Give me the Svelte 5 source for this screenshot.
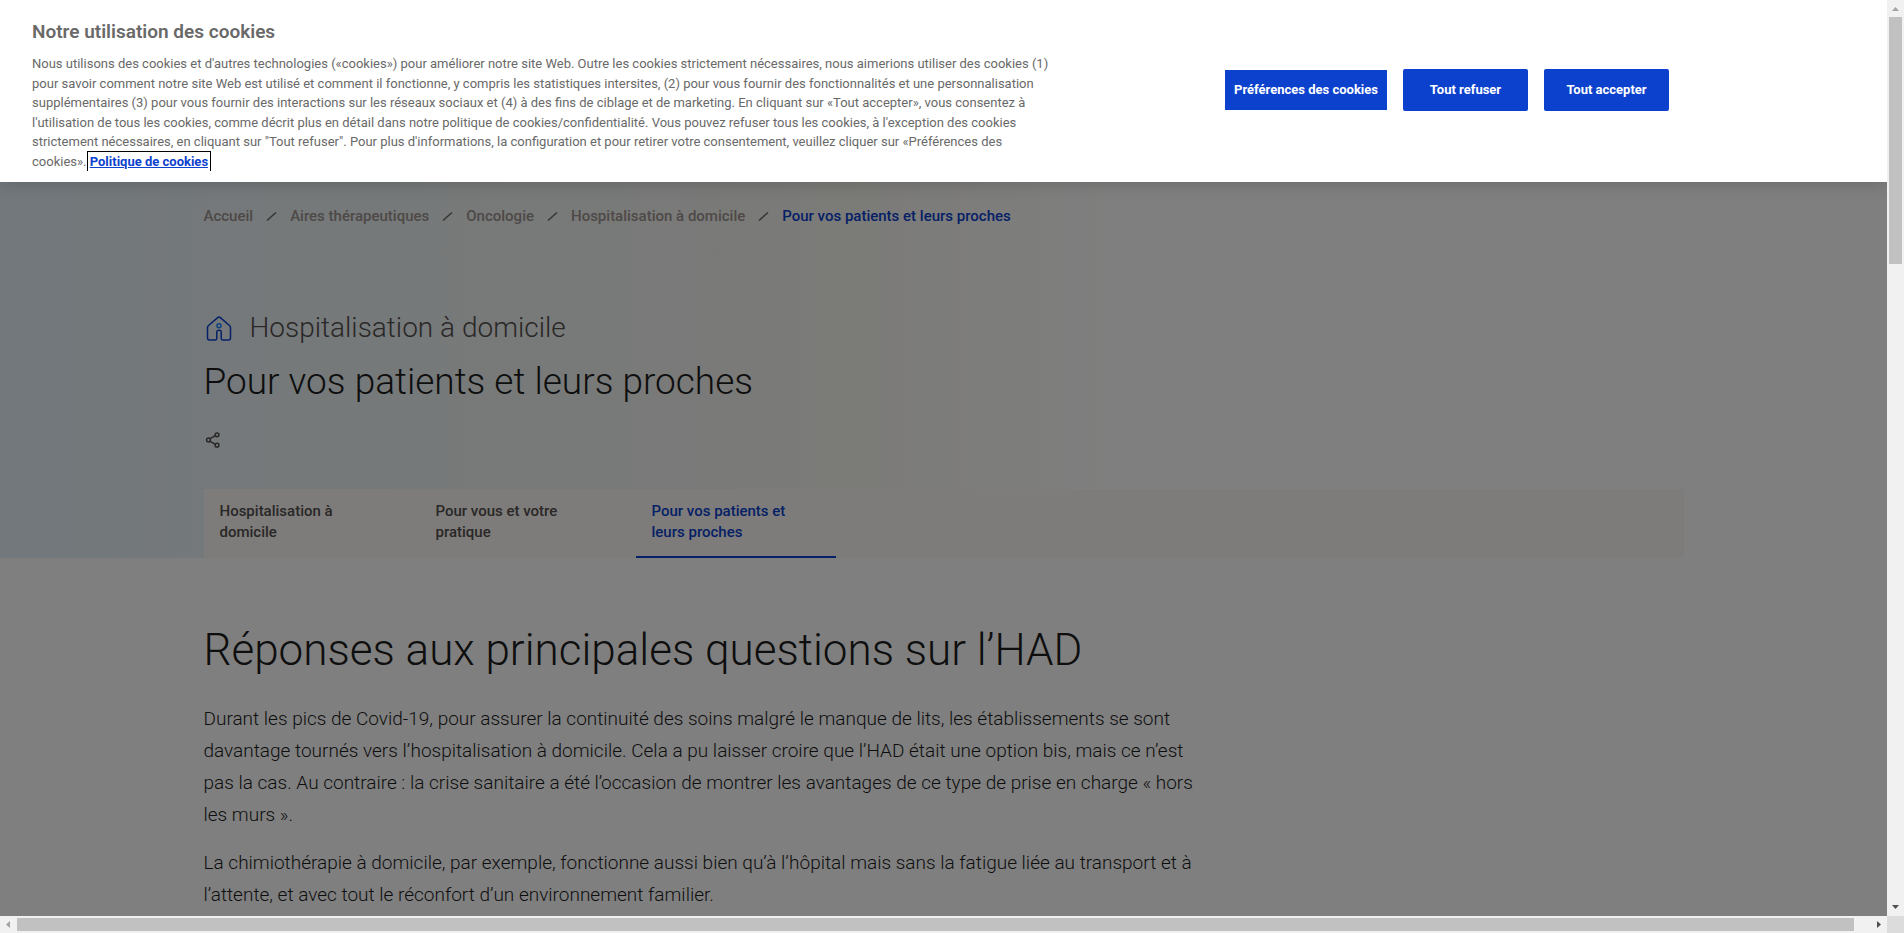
<script>
  const trail = ['Accueil', 'Aires thérapeutiques', 'Oncologie', 'Hospitalisation à domicile'];
  const tabs = [
    { label: 'Hospitalisation à domicile', active: false },
    { label: 'Pour vous et votre pratique', active: false },
    { label: 'Pour vos patients et leurs proches', active: true }
  ];
</script>

<div class="window">
  <div class="viewport">
    <header class="hero">
      <div class="container">
        <nav class="breadcrumb" aria-label="Fil d’Ariane">
          {#each trail as item}
            <a href="#top">{item}</a>
            <svg width="11" height="9" viewBox="0 0 11 9" aria-hidden="true"><path d="M1 8.500 10 0.500" /></svg>
          {/each}
          <a href="#top" class="current" aria-current="page">Pour vos patients et leurs proches</a>
        </nav>

        <div class="topic">
          <svg width="30" height="30" viewBox="0 0 30 30" aria-hidden="true">
            <path d="M13.700 4.600a2 2 0 0 1 2.600 0l9.200 7.900c.6.5 1 1.200 1 2V24.900a2 2 0 0 1-2 2h-6a1.300 1.300 0 0 1-1.300-1.300v-6.300a2 2 0 0 0-2-2h-.4a2 2 0 0 0-2 2v6.300a1.300 1.300 0 0 1-1.300 1.300h-6a2 2 0 0 1-2-2V14.500c0-.8.4-1.500 1-2z" />
            <circle class="head" cx="15" cy="12.800" r="2" />
          </svg>
          <span>Hospitalisation à domicile</span>
        </div>

        <h1>Pour vos patients et leurs proches</h1>

        <button class="share" aria-label="Partager">
          <svg width="16" height="16" viewBox="0 0 16 16" aria-hidden="true">
            <path d="M4.700 6.900 10.300 3.600M4.700 9.100l5.600 3.300" />
            <circle cx="3.500" cy="8" r="1.900" />
            <circle cx="12" cy="2.800" r="1.900" />
            <circle cx="12" cy="13.200" r="1.900" />
          </svg>
        </button>

        <nav class="tabs" aria-label="Rubriques">
          {#each tabs as tab}
            <a href="#top" class:active={tab.active}>{tab.label}</a>
          {/each}
        </nav>
      </div>
    </header>

    <main class="container">
      <article>
        <h2>Réponses aux principales questions sur l’HAD</h2>
        <p>
          Durant les pics de Covid-19, pour assurer la continuité des soins malgré le manque de lits, les
          établissements se sont davantage tournés vers l’hospitalisation à domicile. Cela a pu laisser croire
          que l’HAD était une option bis, mais ce n’est pas la cas. Au contraire&nbsp;: la crise sanitaire a été
          l’occasion de montrer les avantages de ce type de prise en charge «&nbsp;hors les murs&nbsp;».
        </p>
        <p>
          La chimiothérapie à domicile, par exemple, fonctionne aussi bien qu’à l’hôpital mais sans la fatigue
          liée au transport et à l’attente, et avec tout le réconfort d’un environnement familier.
        </p>
      </article>
    </main>

    <div class="shade"></div>

    <section class="cookies" role="dialog" aria-labelledby="cookie-title">
      <div class="notice">
        <h3 id="cookie-title">Notre utilisation des cookies</h3>
        <p>
          Nous utilisons des cookies et d'autres technologies («cookies») pour améliorer notre site Web. Outre
          les cookies strictement nécessaires, nous aimerions utiliser des cookies (1) pour savoir comment notre
          site Web est utilisé et comment il fonctionne, y compris les statistiques intersites, (2) pour vous
          fournir des fonctionnalités et une personnalisation supplémentaires (3) pour vous fournir des
          interactions sur les réseaux sociaux et (4) à des fins de ciblage et de marketing. En cliquant sur
          «Tout accepter», vous consentez à l'utilisation de tous les cookies, comme décrit plus en détail dans
          notre politique de cookies/confidentialité. Vous pouvez refuser tous les cookies, à l'exception des
          cookies strictement nécessaires, en cliquant sur "Tout refuser". Pour plus d'informations, la
          configuration et pour retirer votre consentement, veuillez cliquer sur «Préférences des cookies».
          <a href="#top">Politique de cookies</a>
        </p>
      </div>
      <div class="actions">
        <button class="prefs">Préférences des cookies</button>
        <button>Tout refuser</button>
        <button>Tout accepter</button>
      </div>
    </section>
  </div>

  <div class="bar vertical" aria-hidden="true">
    <svg width="17" height="17" viewBox="0 0 17 17"><path class="dim" d="M5 11h7L8.500 7z" /></svg>
    <div class="track"><div class="thumb"></div></div>
    <svg width="17" height="17" viewBox="0 0 17 17"><path d="M5 6h7L8.500 10z" /></svg>
  </div>
  <div class="bar horizontal" aria-hidden="true">
    <svg width="17" height="17" viewBox="0 0 17 17"><path class="dim" d="M10 5v7L6 8.500z" /></svg>
    <div class="track"><div class="thumb"></div></div>
    <svg width="17" height="17" viewBox="0 0 17 17"><path d="M7 5v7l4-3.500z" /></svg>
  </div>
  <div class="corner"></div>
</div>

<style>
  :global(body) {
    margin: 0;
    overflow: hidden;
  }

  .window {
    display: grid;
    grid-template: minmax(0, 1fr) 17px / minmax(0, 1fr) 17px;
    height: 100vh;
    font-family: Roboto, "Liberation Sans", sans-serif;
    color: #1c1c1c;
    background: #fff;
  }

  .viewport {
    position: relative;
    overflow: hidden;
  }

  .container {
    box-sizing: border-box;
    max-width: 1480px;
    margin: 0 auto;
  }

  a {
    color: inherit;
    text-decoration: none;
  }

  h1, h2, h3, p {
    margin: 0;
  }

  /* Page header */
  .hero {
    padding-top: 204px;
    background: linear-gradient(90deg, #e4f0f8 0%, #eaf2f6 12%, #eff4f2 28%, #f7f6f1 46%, #fff 60%);
  }

  .breadcrumb {
    display: flex;
    align-items: center;
    gap: 13px;
    font-size: 15px;
    font-weight: 500;
    line-height: 24px;
    color: #9c928e;
  }

  .breadcrumb svg {
    fill: none;
    stroke: #706b69;
    stroke-width: 1.500;
  }

  .breadcrumb .current {
    color: #0b41cd;
  }

  .topic {
    display: flex;
    align-items: center;
    gap: 16px;
    margin-top: 80px;
    font-size: 28px;
    font-weight: 300;
    line-height: 40px;
    color: #544f4f;
  }

  .topic svg {
    fill: none;
    stroke: #0b41cd;
    stroke-width: 1.500;
  }

  .topic .head {
    stroke: #1482fa;
  }

  h1 {
    margin-top: 10px;
    font-size: 37px;
    font-weight: 300;
    line-height: 48px;
  }

  .share {
    display: block;
    margin-top: 26px;
    padding: 0 1px;
    border: 0;
    background: none;
    line-height: 0;
  }

  .share svg {
    fill: none;
    stroke: #544f4f;
    stroke-width: 1.500;
  }

  .tabs {
    display: flex;
    gap: 16px;
    margin-top: 41px;
    background: #faf9f4;
  }

  .tabs a {
    box-sizing: border-box;
    width: 200px;
    padding: 12px 44px 13px 16px;
    border-bottom: 2px solid transparent;
    font-size: 15px;
    font-weight: 500;
    line-height: 21px;
    color: #544f4f;
  }

  .tabs .active {
    border-bottom-color: #0b41cd;
    color: #0b41cd;
  }

  /* Article */
  article {
    max-width: 1000px;
    padding-top: 60px;
  }

  h2 {
    font-size: 44px;
    font-weight: 300;
    line-height: 64px;
  }

  article p {
    margin-top: 16px;
    font-size: 19px;
    font-weight: 300;
    line-height: 32px;
  }

  h2 + p {
    margin-top: 21px;
  }

  .shade {
    position: absolute;
    inset: 0;
    background: rgba(0, 0, 0, 0.5);
  }

  /* Cookie notice */
  .cookies {
    position: absolute;
    inset: 0 0 auto 0;
    box-sizing: border-box;
    display: flex;
    align-items: center;
    justify-content: space-between;
    padding: 20px 218px 11px 32px;
    background: #fff;
    box-shadow: 0 0 18px rgba(0, 0, 0, 0.2);
    color: #696969;
  }

  .notice {
    flex: 0 1 1020px;
  }

  h3 {
    font-size: 19px;
    font-weight: 600;
    line-height: 24px;
  }

  .notice p {
    margin-top: 10px;
    font-size: 13px;
    line-height: 1.5;
    overflow: hidden;
  }

  .notice a {
    color: #0b41cd;
    font-weight: 700;
    text-decoration: underline;
    outline: 1px solid #000;
    outline-offset: 2px;
  }

  .actions {
    display: flex;
    align-items: center;
    gap: 16px;
    padding-bottom: 12px;
  }

  .actions button {
    min-width: 125px;
    height: 42px;
    padding: 0 9px;
    border: 0;
    border-radius: 2px;
    background: #0b41cd;
    color: #fff;
    font: 700 13px Roboto, "Liberation Sans", sans-serif;
    white-space: nowrap;
  }

  .actions .prefs {
    height: 40px;
    border-radius: 0;
  }

  /* Scroll bars */
  .bar {
    display: flex;
    background: #f1f1f1;
  }

  .bar svg {
    flex: none;
    fill: #505050;
  }

  .bar .dim {
    fill: #a3a3a3;
  }

  .track {
    flex: 1;
  }

  .thumb {
    background: #c1c1c1;
  }

  .vertical {
    flex-direction: column;
  }

  .vertical .thumb {
    height: 28%;
    margin: 0 2px;
  }

  .horizontal .track {
    padding: 2px 0;
    display: flex;
  }

  .horizontal .thumb {
    width: calc(100% - 16px);
  }

  .corner {
    background: #dcdcdc;
  }
</style>
